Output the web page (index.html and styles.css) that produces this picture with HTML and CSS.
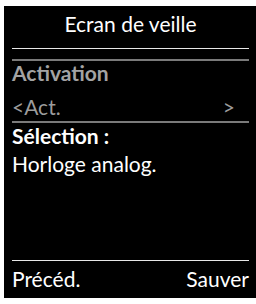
FILE: index.html
```html
<!DOCTYPE html>
<html>
<head>
<meta charset="utf-8">
<link rel="stylesheet" href="styles.css">
</head>
<body>
<div class="screen">
  <div class="title">Ecran de veille</div>
  <div class="rule rule-white"></div>
  <div class="rule rule-gray gap"></div>
  <div class="row label-dim">Activation</div>
  <div class="row option"><span>&lt;Act.</span><span class="arrow">&gt;</span></div>
  <div class="rule rule-gray"></div>
  <div class="row label">Sélection :</div>
  <div class="row value">Horloge analog.</div>
  <div class="spacer"></div>
  <div class="rule rule-white"></div>
  <div class="softkeys"><span>Précéd.</span><span>Sauver</span></div>
</div>
</body>
</html>
```
FILE: styles.css
```css
html, body {
  margin: 0;
  padding: 0;
  background: #fff;
}
.screen {
  margin: 6px 0 0 4px;
  width: 252px;
  height: 292px;
  box-sizing: border-box;
  padding: 0 7px 0 8px;
  background: #000;
  color: #fff;
  font-family: Lato, "Open Sans", sans-serif;
  font-size: 21px;
  line-height: 24px;
  display: flex;
  flex-direction: column;
}
.title {
  height: 42px;
  padding-top: 6px;
  box-sizing: border-box;
  text-align: center;
}
.rule { height: 1px; flex: none; }
.rule-white { background: #e8e8e8; }
.rule-gray { background: #7a7a7a; height: 2px; }
.gap { margin-top: 10px; }
.label-dim { color: #a3a3a3; font-weight: bold; }
.option {
  color: #9c9c9c;
  display: flex;
  justify-content: space-between;
  padding: 10px 14px 2px 0;
}
.label { font-weight: bold; padding-top: 1px; }
.value { padding-top: 4px; }
.spacer { flex: 1; }
.softkeys {
  display: flex;
  justify-content: space-between;
  padding-top: 6px;
  height: 37px;
  box-sizing: border-box;
}
```
